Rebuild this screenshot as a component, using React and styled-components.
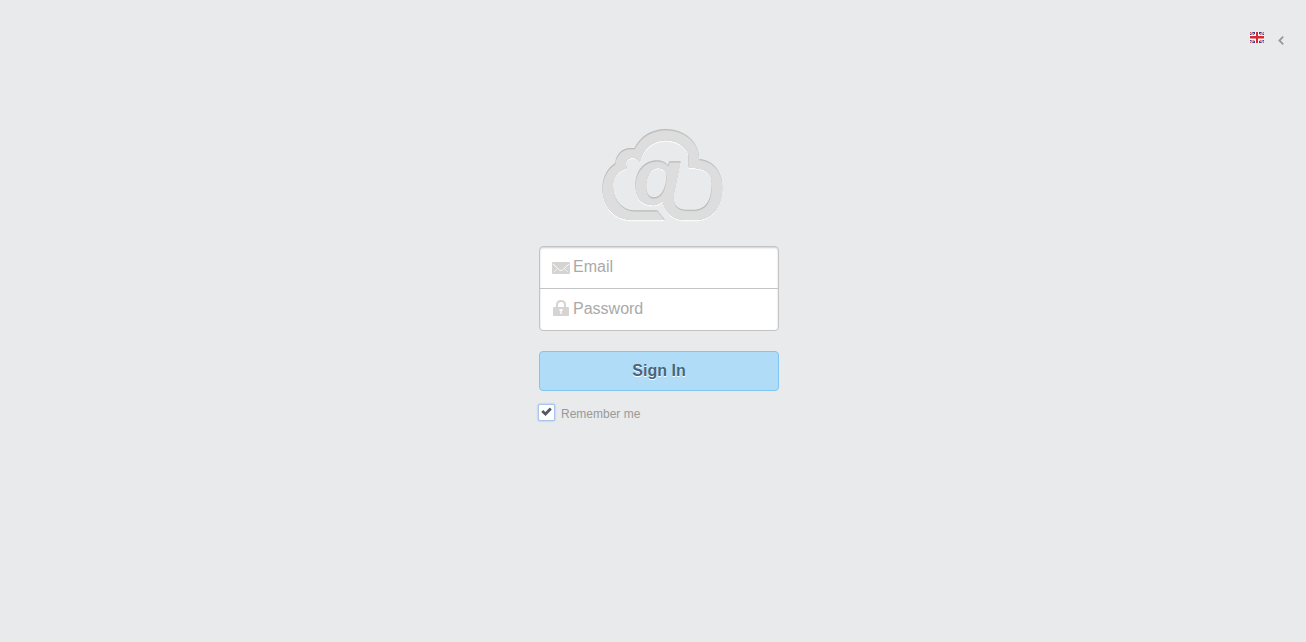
import React, { useState } from "react";
import styled, { createGlobalStyle } from "styled-components";

const GlobalStyle = createGlobalStyle`
  * { box-sizing: border-box; }
  body {
    margin: 0;
    background: #e8eaec;
    font-family: Arial, "Liberation Sans", sans-serif;
    color: #999;
  }
`;

const Page = styled.div`
  display: flex;
  flex-direction: column;
  min-height: 100vh;
`;

const LanguageBar = styled.header`
  display: flex;
  justify-content: flex-end;
  align-items: flex-start;
  gap: 14px;
  height: 120px;
  padding: 32px 22px 0;
`;

const IconButton = styled.button`
  display: block;
  padding: ${(p) => p.$top || 0}px 0 0;
  border: 0;
  background: none;
  cursor: pointer;
  svg { display: block; }
`;

const LoginForm = styled.form`
  display: flex;
  flex-direction: column;
  align-items: center;
  width: 240px;
  margin: 0 auto;
`;

const Main = styled.main`
  padding-left: 12px;
`;

const Logo = styled.svg`
  display: block;
  width: 142px;
  height: 110px;
  margin-bottom: 16px;
`;

const Fields = styled.div`
  width: 100%;
  border: 1px solid #c4c4c4;
  border-radius: 4px;
  background: #fff;
  box-shadow: inset 0 1px 2px rgba(0, 0, 0, 0.2);
`;

const Field = styled.label`
  display: flex;
  align-items: center;
  gap: 3px;
  height: ${(p) => (p.$divided ? 42 : 41)}px;
  padding: 0 12px;
  border-top: ${(p) => (p.$divided ? "1px solid #c4c4c4" : "0")};
  svg { flex: none; display: block; }
`;

const TextInput = styled.input`
  flex: 1;
  min-width: 0;
  height: 38px;
  padding: 0 0 2px;
  border: 0;
  outline: 0;
  background: transparent;
  color: #555;
  font: 16px Arial, "Liberation Sans", sans-serif;
  &::placeholder { color: #a9a9a9; opacity: 1; }
`;

const SubmitButton = styled.button`
  width: 100%;
  height: 40px;
  margin-top: 20px;
  padding: 0 0 1px;
  border: 1px solid #80c6f4;
  border-radius: 4px;
  background: #b0dcf8;
  color: #45667d;
  font: bold 16px Arial, "Liberation Sans", sans-serif;
  text-shadow: 0 1px 0 #fff;
  cursor: pointer;
`;

const Remember = styled.label`
  display: flex;
  align-items: flex-start;
  gap: 7px;
  width: 100%;
  margin-top: 14px;
  font-size: 12px;
  line-height: 19px;
  color: #999;
`;

const CheckHolder = styled.span`
  display: grid;
  width: 15px;
  height: 15px;
  > * { grid-area: 1 / 1; }
  svg { pointer-events: none; margin: 2px; }
`;

const Checkbox = styled.input`
  appearance: none;
  width: 15px;
  height: 15px;
  margin: 0;
  border-radius: 1px;
  background: #fff;
  box-shadow: 0 0 0 1px #a9c4ea, 0 0 2px 1px #8fb3e8;
`;

const LOGO_SHAPE =
  "M210 300H112C58 300 22 259 22 205C22 171 38 143 61 129C62 101 86 78 118 85C134 50 169 27 212 27C268 27 313 65 312 117C353 119 382 153 382 200C382 263 351 300 300 300H272C234 300 210 278 203 243C194 253 180 257 166 255C137 252 121 230 121 196C121 151 149 121 186 121C202 121 213 127 219 136L223 124H257L237 222C232 254 246 269 276 269H297C336 269 350 235 350 190C350 157 329 143 283 143Q280 143 280 138V102C268 76 243 61 212 61C173 61 143 87 134 128C128 117 120 113 112 113C97 114 88 126 96 144C67 154 53 173 54 200C55 241 84 271 122 271H187ZM189 144C170 144 157 164 154 190C151 216 160 232 177 232C197 232 209 209 213 182C217 155 208 144 189 144Z";

function CloudLogo() {
  return (
    <Logo viewBox="-21 0 426 330" role="img" aria-label="Webmail">
      <defs>
        <clipPath id="cloud">
          <path d={LOGO_SHAPE} clipRule="evenodd" />
        </clipPath>
      </defs>
      <g fillRule="evenodd">
        <path d={LOGO_SHAPE} fill="#fafbfb" transform="translate(0 4)" />
        <path d={LOGO_SHAPE} fill="#b9b9b9" />
        <g clipPath="url(#cloud)">
          <path d={LOGO_SHAPE} fill="#cfcfcf" transform="translate(1 3)" />
          <path d={LOGO_SHAPE} fill="#dddddd" transform="translate(1 5)" />
        </g>
      </g>
    </Logo>
  );
}

function Flag() {
  return (
    <svg width="14" height="11" viewBox="0 0 14 11" aria-hidden="true">
      <path fill="#37458c" d="M0 0h14v11H0z" />
      <path stroke="#fff" strokeWidth="2" d="M0 0l14 11M14 0L0 11" />
      <path stroke="#d44" strokeWidth="1" d="M0 0l14 11M14 0L0 11" />
      <path fill="#fff" d="M5 0h4v11H5zM0 3h14v5H0z" />
      <path fill="#d52b35" d="M6 0h2v11H6zM0 4h14v2H0z" />
      <path fill="#e58b91" d="M0 6h6v1H0zM8 6h6v1H8z" />
    </svg>
  );
}

function Chevron() {
  return (
    <svg width="6" height="9" viewBox="0 0 6 9" aria-hidden="true">
      <path d="M5.200 .7L1.400 4.500L5.200 8.300" fill="none" stroke="#999" strokeWidth="1.800" />
    </svg>
  );
}

function MailIcon() {
  return (
    <svg width="18" height="14" viewBox="0 0 18 14" aria-hidden="true">
      <rect y="1" width="18" height="12" rx="1" fill="#d6d4d3" />
      <path d="M1 3l6.500 6q1.500 1 3 0L17 3" fill="none" stroke="#fff" strokeWidth=".9" />
      <path d="M2 11l3-3M16 11l-3-3" fill="none" stroke="#fff" strokeWidth=".6" />
    </svg>
  );
}

function LockIcon() {
  return (
    <svg width="18" height="20" viewBox="0 0 18 20" aria-hidden="true">
      <path d="M5 8V5q0-4 4-4t4 4v3" fill="none" stroke="#d6d4d3" strokeWidth="2" />
      <rect x="1" y="7" width="16" height="9" rx="1" fill="#d6d4d3" />
      <path d="M7.500 9h3v2h-.8v3H8.300v-3h-.8z" fill="#fff" />
    </svg>
  );
}

export default function App() {
  const [remember, setRemember] = useState(true);
  return (
    <Page>
      <GlobalStyle />
      <LanguageBar>
        <IconButton type="button" aria-label="Language: English">
          <Flag />
        </IconButton>
        <IconButton type="button" aria-label="Show languages" $top={4}>
          <Chevron />
        </IconButton>
      </LanguageBar>
      <Main>
        <LoginForm onSubmit={(e) => e.preventDefault()}>
          <CloudLogo />
          <Fields>
            <Field>
              <MailIcon />
              <TextInput type="email" placeholder="Email" aria-label="Email" />
            </Field>
            <Field $divided>
              <LockIcon />
              <TextInput type="password" placeholder="Password" aria-label="Password" />
            </Field>
          </Fields>
          <SubmitButton type="submit">Sign In</SubmitButton>
          <Remember>
            <CheckHolder>
              <Checkbox
                type="checkbox"
                checked={remember}
                onChange={(e) => setRemember(e.target.checked)}
              />
              {remember && (
                <svg width="11" height="9" viewBox="0 0 11 9" aria-hidden="true">
                  <path d="M1.200 4L4.500 7L9.800 1.500" fill="none" stroke="#505a62" strokeWidth="2.800" />
                </svg>
              )}
            </CheckHolder>
            Remember me
          </Remember>
        </LoginForm>
      </Main>
    </Page>
  );
}
